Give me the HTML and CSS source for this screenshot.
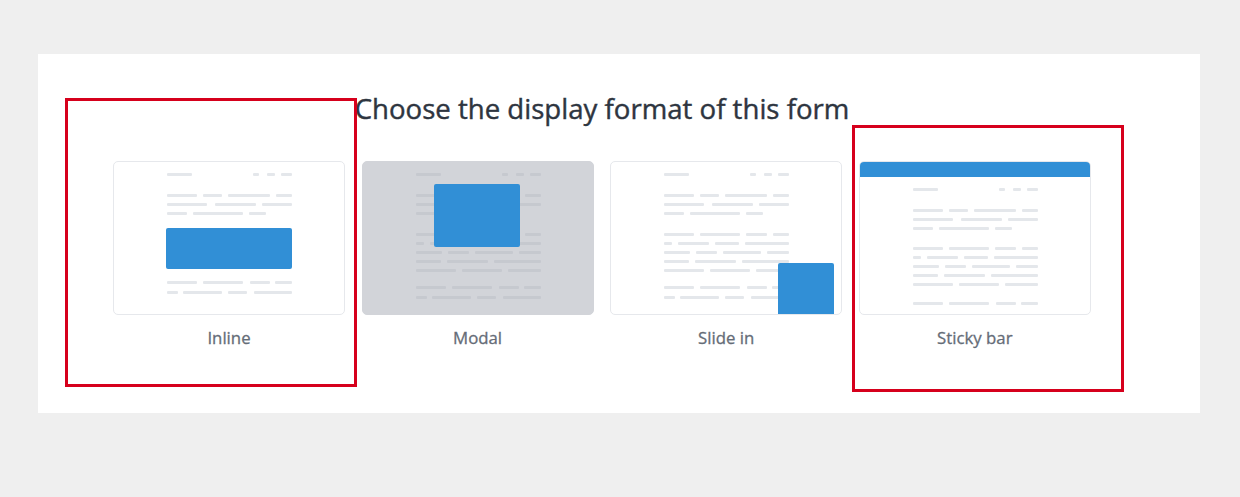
FILE: index.html
```html
<!DOCTYPE html>
<html>
<head>
<meta charset="utf-8">
<link rel="stylesheet" href="styles.css">
</head>
<body>
<svg class="defs" aria-hidden="true">
  <defs>
    <g id="hdr"><rect x="54" y="0" width="25" height="3" rx="1"/><rect x="140" y="0" width="6" height="3" rx="1"/><rect x="154" y="0" width="8" height="3" rx="1"/><rect x="168" y="0" width="11" height="3" rx="1"/></g>
    <g id="txt3">
      <rect x="54" y="0" width="30" height="3" rx="1"/><rect x="90" y="0" width="19" height="3" rx="1"/><rect x="115" y="0" width="42" height="3" rx="1"/><rect x="163" y="0" width="16" height="3" rx="1"/>
      <rect x="54" y="9" width="40" height="3" rx="1"/><rect x="102" y="9" width="41" height="3" rx="1"/><rect x="149" y="9" width="30" height="3" rx="1"/>
      <rect x="54" y="18" width="20" height="3" rx="1"/><rect x="80" y="18" width="50" height="3" rx="1"/><rect x="136" y="18" width="17" height="3" rx="1"/>
    </g>
    <g id="txt5">
      <rect x="54" y="0" width="30" height="3" rx="1"/><rect x="90" y="0" width="40" height="3" rx="1"/><rect x="136" y="0" width="21" height="3" rx="1"/><rect x="163" y="0" width="16" height="3" rx="1"/>
      <rect x="54" y="9" width="8" height="3" rx="1"/><rect x="68" y="9" width="31" height="3" rx="1"/><rect x="105" y="9" width="24" height="3" rx="1"/><rect x="135" y="9" width="44" height="3" rx="1"/>
      <rect x="54" y="18" width="26" height="3" rx="1"/><rect x="86" y="18" width="21" height="3" rx="1"/><rect x="113" y="18" width="38" height="3" rx="1"/><rect x="157" y="18" width="22" height="3" rx="1"/>
      <rect x="54" y="27" width="25" height="3" rx="1"/><rect x="85" y="27" width="41" height="3" rx="1"/><rect x="132" y="27" width="47" height="3" rx="1"/>
      <rect x="54" y="36" width="40" height="3" rx="1"/><rect x="100" y="36" width="40" height="3" rx="1"/><rect x="146" y="36" width="33" height="3" rx="1"/>
    </g>
    <g id="txt1"><rect x="54" y="0" width="30" height="3" rx="1"/><rect x="90" y="0" width="40" height="3" rx="1"/><rect x="137" y="0" width="20" height="3" rx="1"/><rect x="162" y="0" width="17" height="3" rx="1"/></g>
    <g id="txt2">
      <use href="#txt1"/>
      <rect x="54" y="10" width="11" height="3" rx="1"/><rect x="70" y="10" width="39" height="3" rx="1"/><rect x="115" y="10" width="19" height="3" rx="1"/><rect x="141" y="10" width="38" height="3" rx="1"/>
    </g>
  </defs>
</svg>

<div class="panel">
  <h1 class="title">Choose the display format of this form</h1>
  <div class="options">
    <div class="option">
      <div class="thumb">
        <svg class="art" viewBox="0 0 232 154" width="232" height="154">
          <g class="ln">
            <use href="#hdr" y="12"/>
            <use href="#txt3" y="33"/>
            <use href="#txt2" y="120"/>
          </g>
          <rect class="blue" x="53" y="67" width="126" height="41" rx="2"/>
        </svg>
      </div>
      <div class="label">Inline</div>
    </div>
    <div class="option">
      <div class="thumb thumb-modal">
        <svg class="art" viewBox="0 0 232 154" width="232" height="154">
          <g class="ln-dark">
            <use href="#hdr" y="12"/>
            <use href="#txt3" y="33"/>
            <use href="#txt5" y="72"/>
            <use href="#txt2" y="125"/>
          </g>
          <rect class="blue" x="72" y="23" width="86" height="63" rx="2"/>
        </svg>
      </div>
      <div class="label">Modal</div>
    </div>
    <div class="option">
      <div class="thumb">
        <svg class="art" viewBox="0 0 232 154" width="232" height="154">
          <g class="ln">
            <use href="#hdr" y="12"/>
            <use href="#txt3" y="33"/>
            <use href="#txt5" y="72"/>
            <use href="#txt2" y="125"/>
          </g>
          <path class="blue" d="M168 104 a2 2 0 0 1 2 -2 H222 a2 2 0 0 1 2 2 V154 H168 Z"/>
        </svg>
      </div>
      <div class="label">Slide in</div>
    </div>
    <div class="option">
      <div class="thumb">
        <svg class="art" viewBox="0 0 232 154" width="232" height="154">
          <path class="blue" d="M0 16 V4 a4 4 0 0 1 4 -4 H228 a4 4 0 0 1 4 4 V16 Z"/>
          <g class="ln">
            <use href="#hdr" y="27"/>
            <use href="#txt3" y="48"/>
            <use href="#txt5" y="86"/>
            <use href="#txt1" y="141"/>
          </g>
        </svg>
      </div>
      <div class="label">Sticky bar</div>
    </div>
  </div>
  <div class="mark mark-inline"></div>
  <div class="mark mark-sticky"></div>
</div>
</body>
</html>
```

FILE: styles.css
```css
html, body {
  margin: 0;
  padding: 0;
}
body {
  background: #efefef;
  font-family: "Open Sans", "Noto Sans", sans-serif;
  width: 1240px;
  height: 497px;
  overflow: hidden;
}
.defs {
  position: absolute;
  width: 0;
  height: 0;
  overflow: hidden;
}
.panel {
  position: relative;
  margin: 54px 0 0 38px;
  width: 1162px;
  height: 359px;
  background: #ffffff;
  box-sizing: border-box;
  padding-top: 38px;
}
.title {
  margin: 0;
  text-align: center;
  font-size: 27.6px;
  line-height: 32px;
  font-weight: 400;
  -webkit-text-stroke: 0.4px #2e3540;
  color: #2e3540;
  padding-right: 34px;
}
.options {
  display: flex;
  gap: 16.6px;
  margin-top: 37px;
  padding-left: 75px;
}
.option {
  width: 232px;
  display: flex;
  flex-direction: column;
  align-items: center;
}
.thumb {
  width: 232px;
  height: 154px;
  box-sizing: border-box;
  border: 1px solid #e6e8ec;
  border-radius: 5px;
  background: #fff;
  overflow: hidden;
  position: relative;
}
.thumb-modal {
  background: #d2d4d9;
  border-color: #d2d4d9;
}
.art {
  display: block;
  position: absolute;
  left: -1px;
  top: -1px;
}
.ln { fill: #e4e7eb; }
.ln-dark { fill: #c6c9cf; }
.blue { fill: #318fd6; }
.label {
  margin-top: 13px;
  font-size: 16.8px;
  line-height: 20px;
  font-weight: 400;
  -webkit-text-stroke: 0.3px #656c77;
  color: #656c77;
}
.mark {
  position: absolute;
  border: 3px solid #d6001c;
  box-sizing: border-box;
}
.mark-inline {
  left: 27px;
  top: 44px;
  width: 292px;
  height: 289px;
}
.mark-sticky {
  left: 814px;
  top: 71px;
  width: 272px;
  height: 267px;
}
```
